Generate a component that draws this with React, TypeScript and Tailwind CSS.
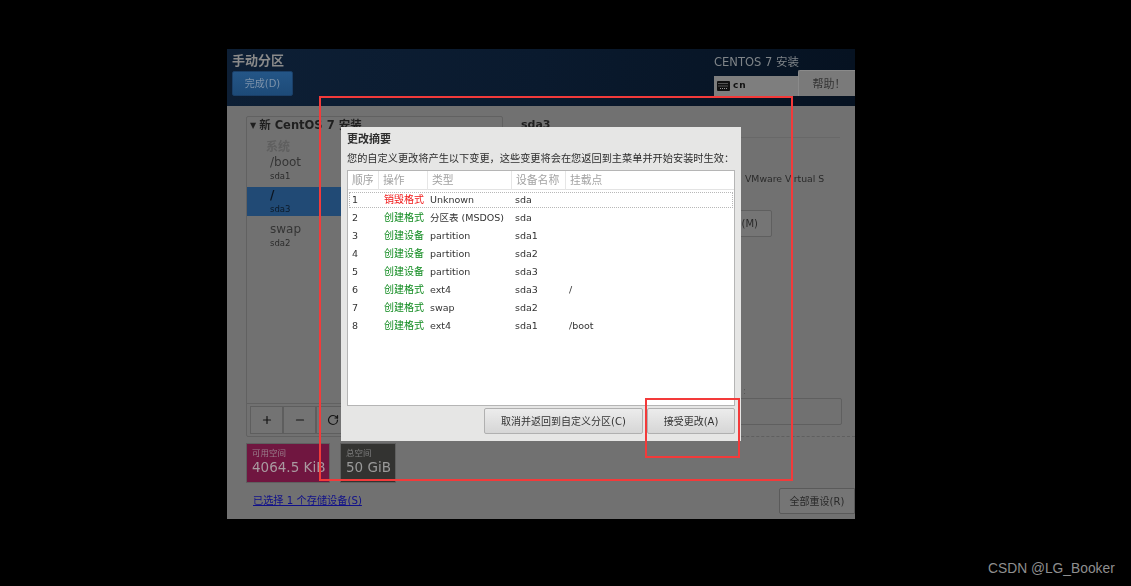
import { Minus, Plus, RotateCw } from "lucide-react";

const FONT = "font-['DejaVu_Sans','Noto_Sans_CJK_SC',sans-serif]";

const changes = [
    { action: "销毁格式", type: "Unknown", device: "sda", mount: "", destroy: true },
    { action: "创建格式", type: "分区表 (MSDOS)", device: "sda", mount: "" },
    { action: "创建设备", type: "partition", device: "sda1", mount: "" },
    { action: "创建设备", type: "partition", device: "sda2", mount: "" },
    { action: "创建设备", type: "partition", device: "sda3", mount: "" },
    { action: "创建格式", type: "ext4", device: "sda3", mount: "/" },
    { action: "创建格式", type: "swap", device: "sda2", mount: "" },
    { action: "创建格式", type: "ext4", device: "sda1", mount: "/boot" },
];

const COLS = "grid grid-cols-[31px_49px_84px_54px_1fr]";

function KeyboardIcon() {
    return (
        <svg width="13" height="10" viewBox="0 0 13 10" className="shrink-0">
            <rect width="13" height="10" rx="1" fill="#111" />
            <path d="M1.5 2.5h10M1.5 5h10M3 7.5h7" stroke="#999" strokeWidth="1" strokeDasharray="1 1" />
        </svg>
    );
}

function Header() {
    return (
        <header className="h-[57px] shrink-0 flex justify-between bg-[linear-gradient(90deg,#0d1f35,#0a1a2e_50%,#061221)] text-[#8f8f8f]">
            <div className="pl-[5px] pt-[3px]">
                <h1 className="text-[13px] leading-[17px] font-bold text-[#8a8a8a]">手动分区</h1>
                <button className="mt-[2px] w-[61px] h-[25px] rounded-[2px] border border-[#1a3f68] bg-[linear-gradient(#245687,#1d4a78)] text-[10px] text-[#7d93ab]">
                    完成(D)
                </button>
            </div>
            <div className="w-[141px] pt-[5px]">
                <p className="text-[11.5px] leading-[17px] text-[#7f8488]">CENTOS 7 安装</p>
                <div className="flex items-end h-[25px]">
                    <div className="w-[84px] h-[20px] bg-[#7e7e7e] flex items-center gap-[3px] pl-[3px] text-[9px] font-bold text-[#111]">
                        <KeyboardIcon />
                        <span className="tracking-[1px]">cn</span>
                    </div>
                    <button className="w-[57px] h-[26px] rounded-tl-[2px] bg-[#7a7a7a] border-l border-t border-[#8a8a8a] pl-[4px] text-[11px] text-[#333] font-['Noto_Sans_CJK_SC',sans-serif]">
                        帮助！
                    </button>
                </div>
            </div>
        </header>
    );
}

function MountRow({ name, device, selected }: { name: string; device: string; selected?: boolean }) {
    return (
        <div className={`h-[29px] pl-[23px] ${selected ? "bg-[#214a75] text-[#0d1a28]" : "text-[#2b2b2b]"}`}>
            <p className={`text-[12px] leading-[17px] ${selected ? "text-[#0c1520] font-bold" : "text-[#353535]"}`}>{name}</p>
            <p className="text-[8.5px] leading-[10px]">{device}</p>
        </div>
    );
}

function LeftColumn() {
    return (
        <div className="w-[257px] flex flex-col">
            <div className="h-[321px] rounded-[2px] border border-[#616161] flex flex-col">
                <p className="h-[18px] pl-[3px] flex items-center gap-[3px] text-[11.5px] font-bold text-[#1f1f1f]">
                    <span className="text-[8px]">▼</span>
                    新 CentOS 7 安装
                </p>
                <div className="flex-1 flex flex-col">
                    <p className="mt-[5px] pl-[19px] h-[14px] text-[12px] leading-[14px] font-bold text-[#5f5f5f]">系统</p>
                    <MountRow name="/boot" device="sda1" />
                    <div className="mt-[4px]" />
                    <MountRow name="/" device="sda3" selected />
                    <div className="mt-[5px]" />
                    <MountRow name="swap" device="sda2" />
                </div>
                <div className="h-[33px] border-t border-[#616161] px-[3px] py-[2px] flex">
                    {[Plus, Minus, RotateCw].map((Icon, i) => (
                        <div key={i} className="w-[33px] h-[28px] bg-[#737373] border border-[#5e5e5e] flex items-center justify-center text-[#141414]">
                            <Icon size={12} strokeWidth={2.4} />
                        </div>
                    ))}
                </div>
            </div>
            <div className="mt-[6px] flex gap-[10px]">
                <div className="w-[84px] h-[40px] bg-[#701640] border border-[#5f5f5f] pl-[5px] pt-[3px]">
                    <p className="text-[8.5px] leading-[12px] text-[#9a7f8c]">可用空间</p>
                    <p className="text-[13.5px] leading-[17px] text-[#a99aa0]">4064.5 KiB</p>
                </div>
                <div className="w-[56px] h-[40px] bg-[#333331] border border-[#5f5f5f] pl-[5px] pt-[3px]">
                    <p className="text-[8.5px] leading-[12px] text-[#7f7f7f]">总空间</p>
                    <p className="text-[13.5px] leading-[17px] text-[#9a9a9a]">50 GiB</p>
                </div>
            </div>
            <a className="mt-[10px] ml-[7px] text-[10.2px] leading-[16px] text-[#10108a] underline">已选择 1 个存储设备(S)</a>
        </div>
    );
}

function RightColumn() {
    return (
        <div className="flex-1 ml-[18px] flex flex-col">
            <p className="h-[22px] text-[11px] font-bold leading-[16px] text-[#1f1f1f] border-b border-[#686868] mr-[15px] pt-[1px]">sda3</p>
            <p className="mt-[34px] pl-[224px] text-[9.3px] leading-[14px] text-[#2a2a2a] whitespace-nowrap">VMware Virtual S</p>
            <div className="mt-[24px] ml-[210px] w-[41px] h-[27px] rounded-[2px] border border-[#5f5f5f] bg-[#757575] flex items-center justify-end pr-[13px] text-[10px] text-[#2a2a2a]">
                (M)
            </div>
            <p className="mt-[147px] ml-[222px] h-[14px] text-[9px] leading-[14px] text-[#555]">:</p>
            <div className="ml-[200px] w-[121px] h-[27px] rounded-[2px] border border-[#5f5f5f]" />
            <div className="mt-[11px] ml-[200px] border-t border-dashed border-[#5f5f5f]" />
            <div className="mt-[51px] ml-[258px] w-[76px] h-[26px] rounded-l-[2px] border border-[#5a5a5a] bg-[#757575] flex items-center justify-center text-[10px] text-[#2a2a2a]">
                全部重设(R)
            </div>
        </div>
    );
}

function SummaryDialog() {
    return (
        <div className="absolute left-[114px] top-[78px] w-[400px] h-[314px] bg-[#e6e6e5] px-[6px] flex flex-col">
            <h2 className="mt-[6px] text-[11px] leading-[14px] font-bold text-[#2e2e2e]">更改摘要</h2>
            <p className="mt-[4px] text-[10.2px] leading-[14px] text-[#2e2e2e] whitespace-nowrap font-['Noto_Sans_CJK_SC',sans-serif]">
                您的自定义更改将产生以下变更，这些变更将会在您返回到主菜单并开始安装时生效：
            </p>
            <div className="mt-[5px] h-[236px] w-[388px] bg-white border border-[#b5b5b5] text-[9.5px] text-[#333]">
                <div className={`${COLS} h-[19px] border-b border-[#e3e3e3] text-[10.8px] text-[#a3a3a3] leading-[19px]`}>
                    {["顺序", "操作", "类型", "设备名称", "挂载点"].map((title) => (
                        <div key={title} className="pl-[4px] border-r last:border-r-0 border-[#e6e6e6]">{title}</div>
                    ))}
                </div>
                <div className="pt-[2px]">
                    {changes.map((row, i) => (
                        <div
                            key={i}
                            className={`${COLS} leading-[14px] border border-dotted mx-[1px] ${i === 0 ? "border-[#b8b8b8] h-[16px] mb-[2px]" : "border-transparent h-[18px]"}`}
                        >
                            <div className="pl-[2px]">{i + 1}</div>
                            <div className={`pl-[3px] text-[10px] ${row.destroy ? "text-[#f01818]" : "text-[#0f8a1e]"}`}>{row.action}</div>
                            <div className="whitespace-nowrap">{row.type}</div>
                            <div className="pl-[1px]">{row.device}</div>
                            <div className="pl-[1px]">{row.mount}</div>
                        </div>
                    ))}
                </div>
            </div>
            <div className="mt-[2px] flex justify-end gap-[4px]">
                <button className="w-[159px] h-[26px] rounded-[2px] border border-[#b0b0b0] bg-[linear-gradient(#ececec,#d6d6d6)] text-[10px] text-[#333]">
                    取消并返回到自定义分区(C)
                </button>
                <button className="w-[88px] h-[26px] rounded-[2px] border border-[#b0b0b0] bg-[linear-gradient(#ececec,#d6d6d6)] text-[10px] text-[#333]">
                    接受更改(A)
                </button>
            </div>
        </div>
    );
}

export default function App() {
    return (
        <div className={`relative w-[1131px] h-[586px] bg-black overflow-hidden ${FONT}`}>
            <div className="relative left-[227px] top-[49px] w-[628px] h-[470px] bg-[#717171] flex flex-col blur-[0.45px]">
                <Header />
                <main className="flex flex-1 pl-[19px] pt-[10px]">
                    <LeftColumn />
                    <RightColumn />
                </main>
                <SummaryDialog />
            </div>
            {/* annotations drawn on top of the screenshot */}
            <div className="absolute left-[319px] top-[96px] w-[474px] h-[385px] border-2 border-[#f33a3a]" />
            <div className="absolute left-[645px] top-[398px] w-[95px] h-[60px] border-2 border-[#f33a3a]" />
            <span className="absolute left-[988px] top-[560px] text-[13.8px] leading-[18px] text-[#8f8f8f] font-['Liberation_Sans',sans-serif]">
                CSDN @LG_Booker
            </span>
        </div>
    );
}
